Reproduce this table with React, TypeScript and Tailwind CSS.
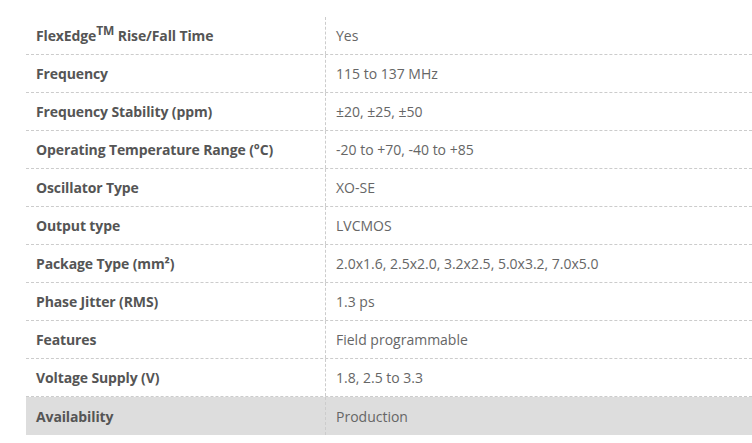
const rows: { label: React.ReactNode; value: string }[] = [
  {
    label: (
      <>
        FlexEdge<sup className="text-[12px]">TM</sup> Rise/Fall Time
      </>
    ),
    value: "Yes",
  },
  { label: "Frequency", value: "115 to 137 MHz" },
  { label: "Frequency Stability (ppm)", value: "±20, ±25, ±50" },
  { label: "Operating Temperature Range (°C)", value: "-20 to +70, -40 to +85" },
  { label: "Oscillator Type", value: "XO-SE" },
  { label: "Output type", value: "LVCMOS" },
  { label: "Package Type (mm²)", value: "2.0x1.6, 2.5x2.0, 3.2x2.5, 5.0x3.2, 7.0x5.0" },
  { label: "Phase Jitter (RMS)", value: "1.3 ps" },
  { label: "Features", value: "Field programmable" },
  { label: "Voltage Supply (V)", value: "1.8, 2.5 to 3.3" },
  { label: "Availability", value: "Production" },
];

export default function App() {
  return (
    <div
      className="w-[752px] h-[443px] bg-white overflow-hidden pt-[17px] pl-[26px]"
      style={{ fontFamily: '"Open Sans", sans-serif' }}
    >
      <div className="flex flex-col text-[14px]">
        {rows.map((row, i) => {
          const last = i === rows.length - 1;
          return (
            <div
              key={i}
              className={`flex h-[38px] ${last ? "bg-[#dddddd]" : "border-b border-dashed border-[#cccccc]"}`}
            >
              <div className="w-[300px] shrink-0 flex items-center pl-[10px] font-bold tracking-[-0.12px] text-[#555555] border-r border-dashed border-[#cccccc]">
                <span>{row.label}</span>
              </div>
              <div className="flex-1 flex items-center pl-[10px] text-[#666666]">{row.value}</div>
            </div>
          );
        })}
      </div>
    </div>
  );
}
